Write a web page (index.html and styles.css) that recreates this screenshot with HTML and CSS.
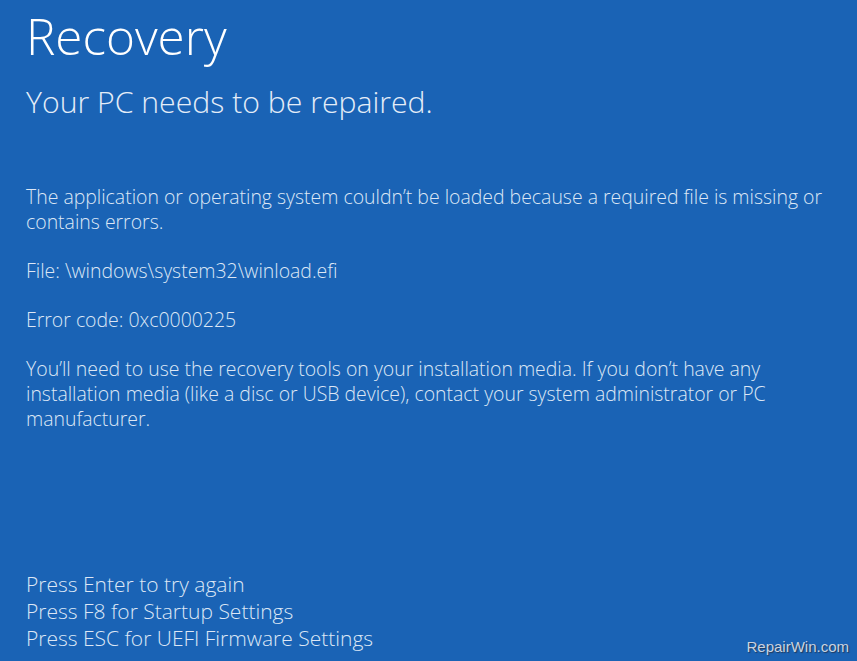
FILE: index.html
```html
<!DOCTYPE html>
<html lang="en">
<head>
<meta charset="utf-8">
<title>Recovery</title>
<link rel="stylesheet" href="styles.css">
</head>
<body>
<main class="screen">
  <header class="head">
    <h1 class="title">Recovery</h1>
    <h2 class="subtitle">Your PC needs to be repaired.</h2>
  </header>
  <section class="details">
    <p class="para">The application or operating system couldn’t be loaded because a required file is missing or contains errors.</p>
    <p class="para">File: \windows\system32\winload.efi</p>
    <p class="para">Error code: 0xc0000225</p>
    <p class="para">You’ll need to use the recovery tools on your installation media. If you don’t have any installation media (like a disc or USB device), contact your system administrator or PC manufacturer.</p>
  </section>
  <footer class="keys">
    <div class="key">Press Enter to try again</div>
    <div class="key">Press F8 for Startup Settings</div>
    <div class="key">Press ESC for UEFI Firmware Settings</div>
  </footer>
  <div class="watermark">RepairWin.com</div>
</main>
</body>
</html>
```
FILE: styles.css
```css
html, body {
  margin: 0;
  padding: 0;
  height: 100%;
  background: #1a63b5;
}
.screen {
  position: relative;
  box-sizing: border-box;
  height: 661px;
  padding: 6px 20px 0 26px;
  display: flex;
  flex-direction: column;
  font-family: "Open Sans", "Noto Sans", sans-serif;
  font-weight: 300;
  color: #dde7f5;
}
.head {
  display: flex;
  flex-direction: column;
}
.title {
  margin: 0;
  font-weight: 300;
  font-size: 49.4px;
  line-height: 60px;
  color: #ffffff;
}
.subtitle {
  margin: 17px 0 0 0;
  font-weight: 300;
  font-size: 30.2px;
  line-height: 38px;
  color: #e4edf8;
}
.details {
  margin-top: 63px;
}
.para {
  margin: 0 0 24px 0;
  font-size: 19.45px;
  line-height: 25px;
}
.keys {
  margin-top: auto;
  margin-bottom: 9px;
  font-size: 21px;
  line-height: 27px;
}
.watermark {
  position: absolute;
  right: 8px;
  bottom: 6px;
  font-family: "Liberation Sans", Arial, sans-serif;
  font-weight: 400;
  font-size: 15px;
  color: #c9d3e0;
  text-shadow: 1px 1px 1px #223a5a;
}
```
